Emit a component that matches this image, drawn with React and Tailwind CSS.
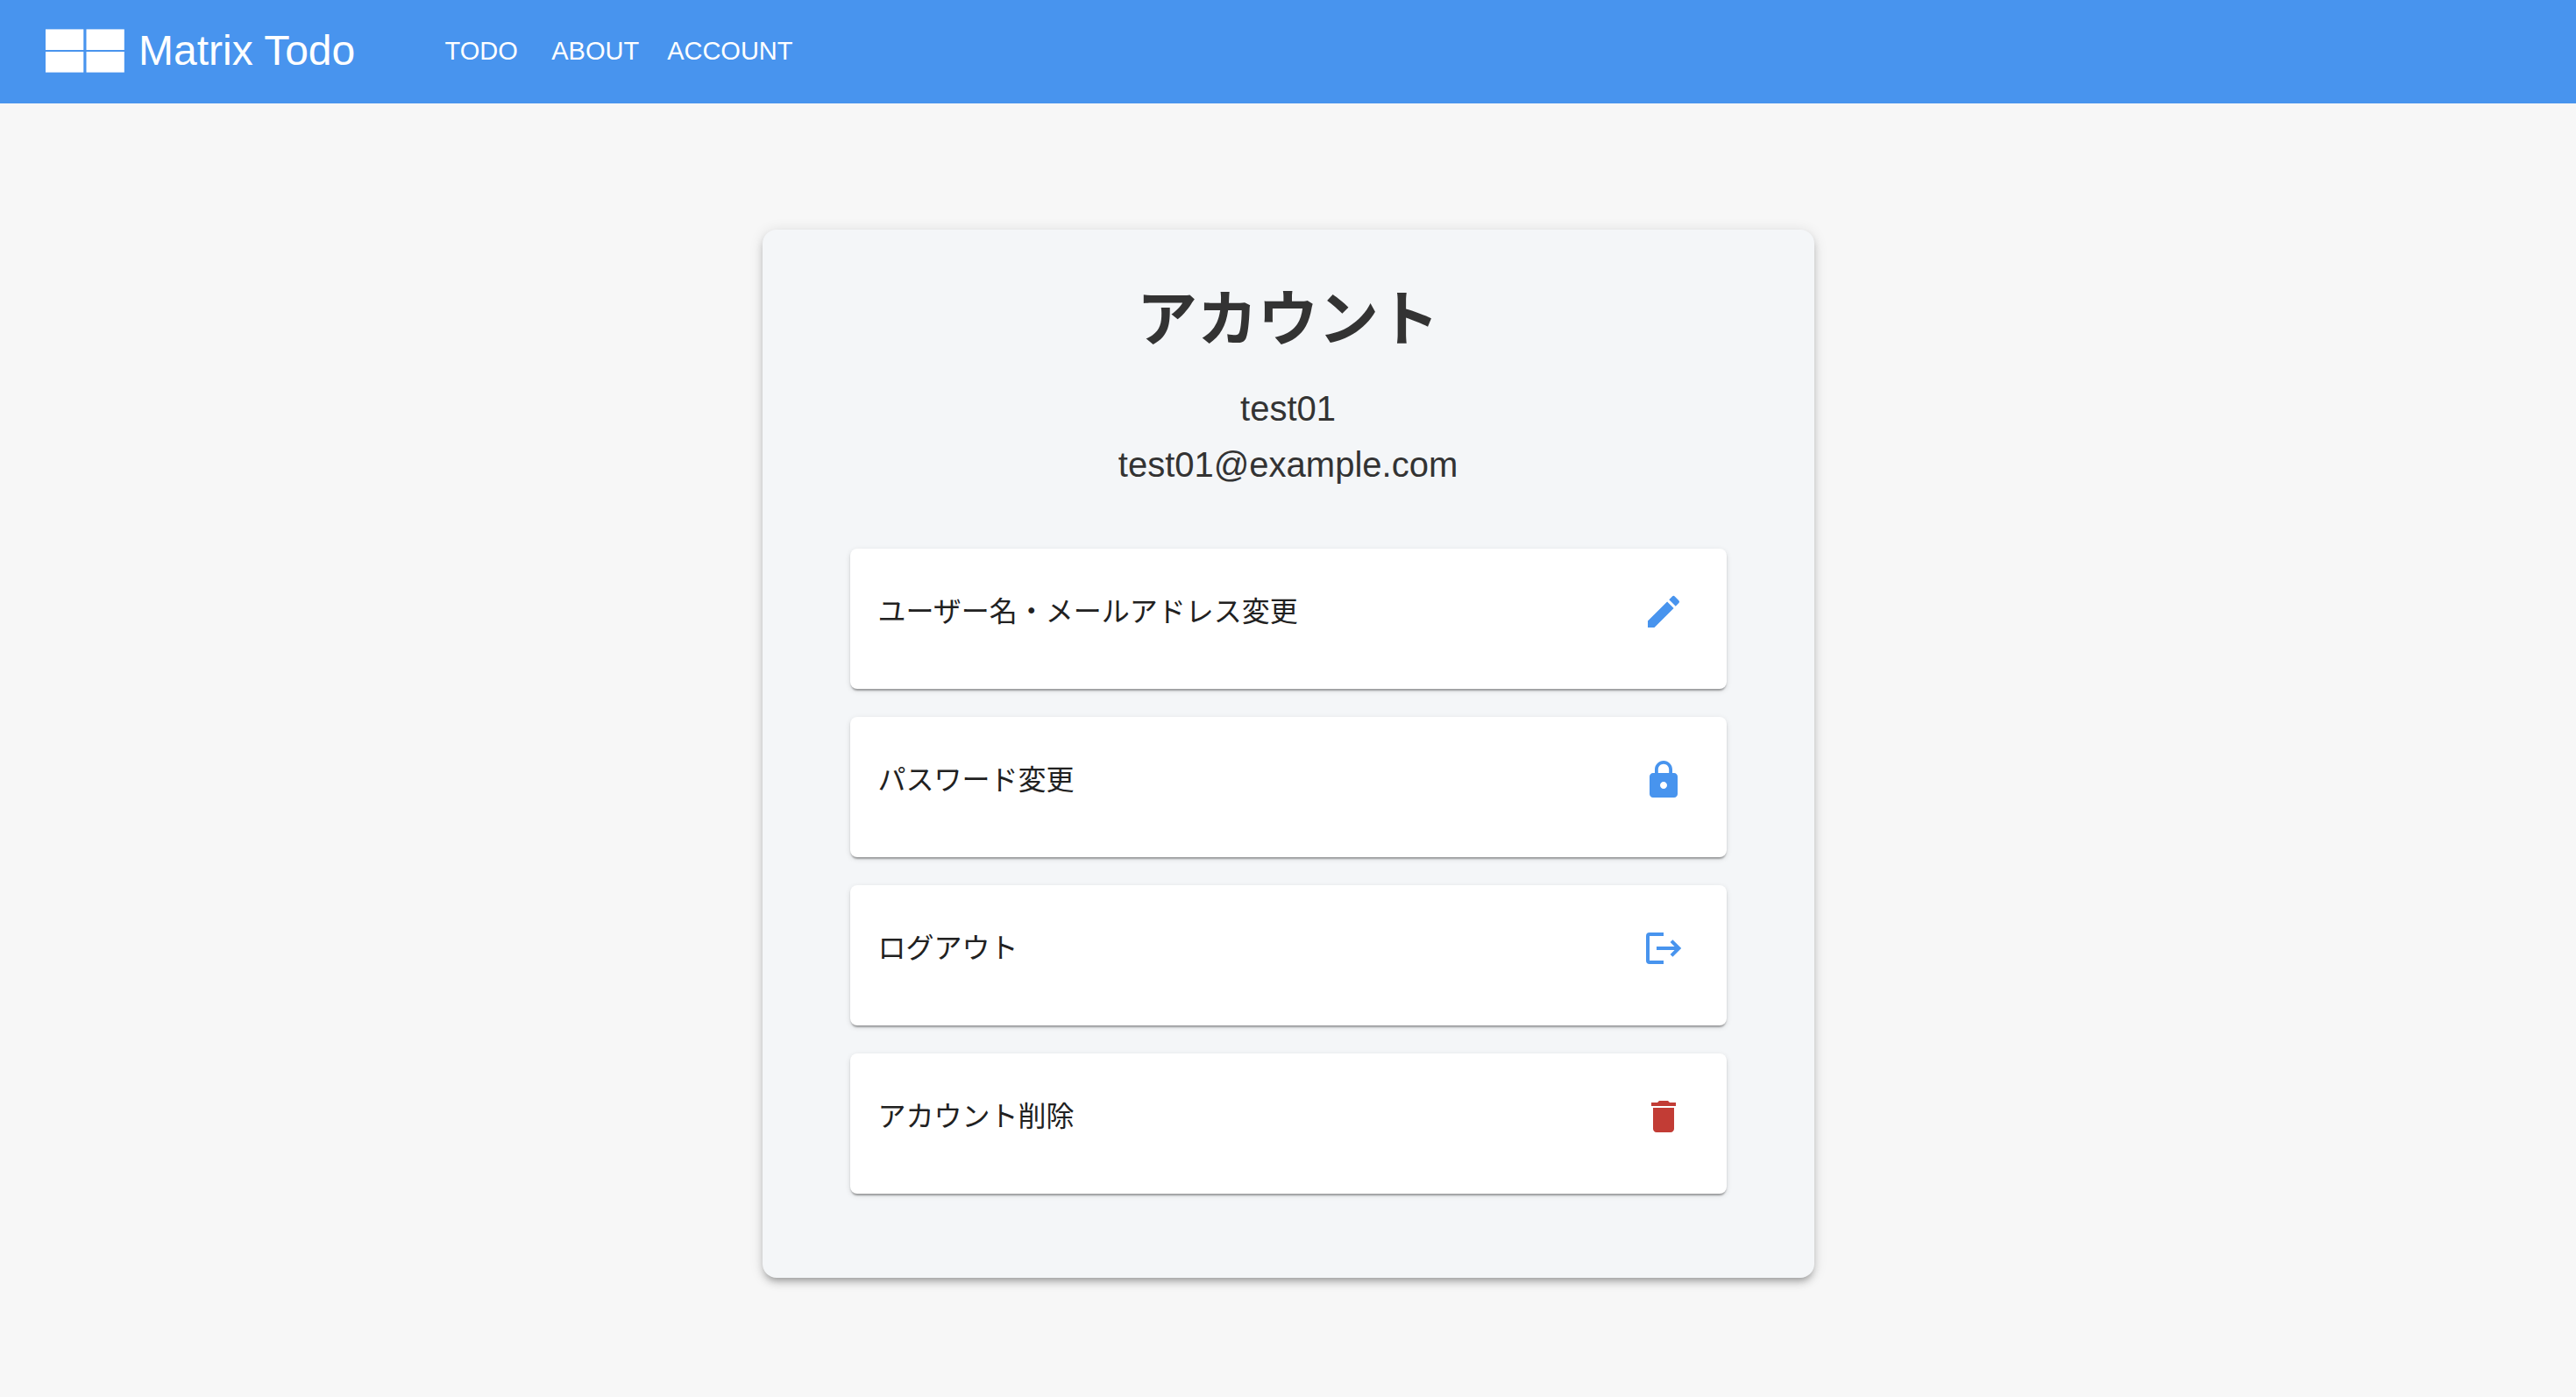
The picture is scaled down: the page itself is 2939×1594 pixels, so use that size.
import { MdDelete, MdEdit, MdLock } from "react-icons/md";

function LogoMark() {
  return (
    <svg viewBox="0 0 90 50" className="h-[50px] w-[90px] shrink-0 fill-white" aria-hidden="true">
      <rect x="0" y="0.4" width="43.3" height="23.6" />
      <rect x="46.5" y="0.4" width="43.3" height="23.6" />
      <rect x="0" y="26" width="43.3" height="23.6" />
      <rect x="46.5" y="26" width="43.3" height="23.6" />
    </svg>
  );
}

function LogoutIcon({ className }) {
  return (
    <svg
      viewBox="0 0 24 24"
      className={className}
      fill="none"
      stroke="currentColor"
      strokeWidth="2"
      aria-hidden="true"
    >
      <path d="M12 4H4Q3 4 3 5v14q0 1 1 1h8" />
      <path d="M8 12h12" />
      <path d="M16.500 7.800L20.700 12l-4.200 4.200" />
    </svg>
  );
}

const navItems = ["TODO", "ABOUT", "ACCOUNT"];

const actions = [
  { label: "ユーザー名・メールアドレス変更", Icon: MdEdit, color: "text-[#4894ee]" },
  { label: "パスワード変更", Icon: MdLock, color: "text-[#4894ee]" },
  { label: "ログアウト", Icon: LogoutIcon, color: "text-[#4894ee]" },
  { label: "アカウント削除", Icon: MdDelete, color: "text-[#c23c35]" },
];

export default function App() {
  return (
    <div className="min-h-screen bg-[#f7f7f7] pb-12 font-['Liberation_Sans','Noto_Sans_CJK_JP',sans-serif]">
      <header className="flex h-[118px] items-center bg-[#4894ee] px-[52px] pb-0.5 text-white">
        <a href="#" className="flex items-center gap-4 text-5xl">
          <LogoMark />
          <span>Matrix Todo</span>
        </a>
        <nav className="ml-20 flex">
          {navItems.map((item) => (
            <a key={item} href="#" className="min-w-32 px-4 text-center text-[29px] leading-[48px]">
              {item}
            </a>
          ))}
        </nav>
      </header>

      <main className="mx-auto mt-36 w-full max-w-[1200px] rounded-2xl bg-[#f4f6f8] px-[100px] pt-[62px] pb-24 shadow-[0_6px_6px_-4px_rgba(0,0,0,0.2),0_6px_8px_0_rgba(0,0,0,0.14),0_2px_16px_0_rgba(0,0,0,0.12)]">
        <div className="text-center text-[#333333]">
          <h1 className="text-[69px] leading-[84px] font-bold">アカウント</h1>
          <p className="mt-[26px] text-[40px] leading-16">test01</p>
          <p className="text-[40px] leading-16">test01@example.com</p>
        </div>
        <ul className="mt-16 flex flex-col gap-8">
          {actions.map(({ label, Icon, color }) => (
            <li
              key={label}
              className="flex items-center justify-between rounded-lg bg-white px-8 pt-8 pb-12 shadow-[0_4px_2px_-2px_rgba(0,0,0,0.2),0_2px_2px_0_rgba(0,0,0,0.14),0_2px_6px_0_rgba(0,0,0,0.12)]"
            >
              <span className="text-[32px] leading-12 text-[#212121]">{label}</span>
              <button type="button" aria-label={label} className={`rounded-full p-4 ${color}`}>
                <Icon className="size-12" />
              </button>
            </li>
          ))}
        </ul>
      </main>
    </div>
  );
}
